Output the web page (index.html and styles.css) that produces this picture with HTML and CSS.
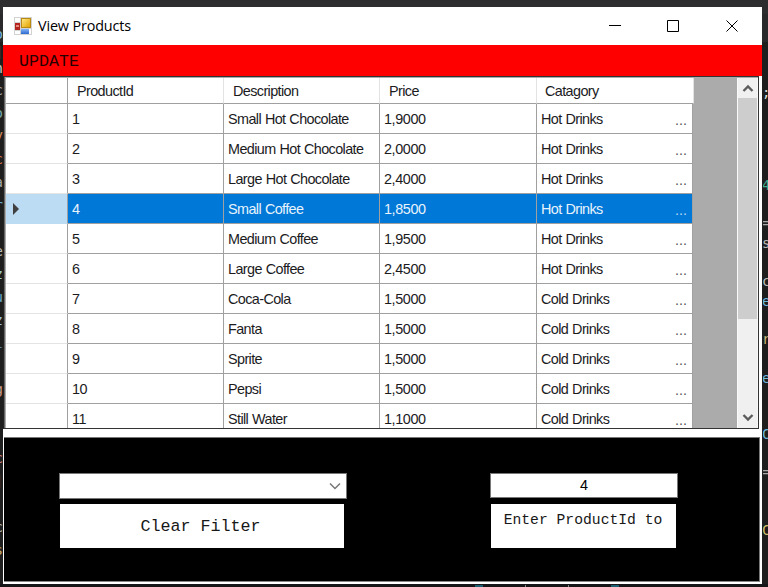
FILE: index.html
```html
<!DOCTYPE html>
<html lang="en">
<head>
<meta charset="utf-8">
<title>View Products</title>
<link rel="stylesheet" href="styles.css">
</head>
<body>
<div class="desktop">
  <div class="editor-left" id="left"></div>
  <div class="editor-right" id="right"></div>
  <div class="editor-bottom"><i></i><i></i><i></i><i></i></div>
  <main class="window">
    <header class="titlebar">
      <svg class="app-icon" width="18" height="18" viewBox="0 0 18 18">
        <defs>
          <linearGradient id="y" x1="0" y1="0" x2="1" y2="1"><stop offset="0" stop-color="#ffe680"/><stop offset="1" stop-color="#e2a300"/></linearGradient>
          <linearGradient id="b" x1="0" y1="0" x2="0" y2="1"><stop offset="0" stop-color="#85b4f5"/><stop offset="1" stop-color="#2d6bd0"/></linearGradient>
        </defs>
        <path fill="#d2d2d2" d="M0 0h18v18H0z"/>
        <path fill="#fff" d="M1 1h5v4H1zM1 14h5v3H1zM15 12h2v5h-2z"/>
        <path fill="#b32520" d="M1 6h5v7H1z"/><path fill="#e58a7c" d="M2 8h3v2H2z"/>
        <path fill="#b98a13" d="M7 1h10v10H7z"/><path fill="url(#y)" d="M8 2h8v8H8z"/>
        <path fill="url(#b)" d="M7 12h8v5H7z"/>
      </svg>
      <h1>View Products</h1>
      <div class="controls">
        <svg width="59" height="38"><path d="M24 18.500h12"/></svg>
        <svg width="58" height="38"><path d="M23.500 13.500h11v11h-11z"/></svg>
        <svg width="60" height="38"><path d="M24.500 13.500l11 11m0-11l-11 11"/></svg>
      </div>
    </header>
    <div class="menu"><span>UPDATE</span></div>
    <section class="gridview">
      <div class="rows" id="rows">
        <div class="row head"><b></b><span>ProductId</span><span>Description</span><span>Price</span><span>Catagory</span></div>
      </div>
      <div class="empty"></div>
      <div class="scroll">
        <svg width="20" height="20"><path d="M5.500 13l4.500-4.500 4.500 4.500"/></svg>
        <div class="thumb"></div>
        <svg width="20" height="20"><path d="M5.500 8l4.500 4.500L14.500 8"/></svg>
      </div>
    </section>
    <section class="panel">
      <div class="group filter">
        <div class="combo"><svg width="12" height="8"><path d="M1 1.500l5 5 5-5"/></svg></div>
        <div class="button">Clear Filter</div>
      </div>
      <div class="group product">
        <div class="input">4</div>
        <div class="button top">Enter ProductId to</div>
      </div>
    </section>
  </main>
</div>
<script src="app.js"></script>
</body>
</html>
```
FILE: styles.css
```css
* { box-sizing: border-box; }
body { margin: 0; overflow: hidden; }
.desktop { position: relative; width: 768px; height: 587px; background: #1e1e1e; overflow: hidden; padding: 7px 6px 3px 3px; }
.desktop::before { content: ""; position: absolute; left: 0; top: 0; width: 768px; height: 42px; background: linear-gradient(#2d2d30 0 14px, #29292b 14px 42px); }
.editor-left, .editor-right { position: absolute; top: 0; height: 587px; overflow: hidden; font: 14px "DejaVu Sans Mono", monospace; line-height: 16px; }
.editor-left { left: 0; width: 3px; }
.editor-right { left: 763px; width: 5px; }
.editor-left i, .editor-right i { position: absolute; font-style: normal; }
.editor-left i { right: 0; }
.editor-right i { left: -1px; }
.editor-bottom { position: absolute; left: 0; top: 584px; width: 768px; height: 3px; background: #161618; display: flex; gap: 42px; padding-left: 475px; }
.editor-bottom i { width: 8px; height: 2px; margin-top: 1px; background: #1b5f72; }
.editor-bottom i:nth-child(2), .editor-bottom i:nth-child(3) { width: 1px; background: #888; }
.window { position: relative; width: 759px; height: 577px; background: #fff; display: flex; flex-direction: column; }
.titlebar { height: 38px; flex: none; display: flex; align-items: center; padding-left: 11px; background: #fff; }
h1 { margin: 0 0 0 6px; font: 14.4px/20px "Open Sans", sans-serif; letter-spacing: -.15px; color: #000; white-space: nowrap; }
.controls { margin-left: auto; display: flex; }
.controls svg { fill: none; stroke: #000; }
.menu { height: 31px; flex: none; background: #f00; padding-left: 16px; font: 16.7px/33px "Liberation Mono", monospace; color: #260000; }
.gridview { height: 353px; flex: none; display: flex; border: solid #333; border-width: 1px 1px 1px 0; border-left: 1px solid #222; margin-right: 3px; padding-top: 1px; background: #ababab; overflow: hidden; box-shadow: inset 1px 0 #666; }
.rows { width: 689px; margin-left: 1px; border-left: 1px solid #ababab; background: #ababab; flex: none; }
.row { display: grid; grid-template-columns: 62px 156px 156px 157px 156px; height: 30px; width: 687px; font: 14.4px/30px "Liberation Sans", sans-serif; letter-spacing: -.6px; word-spacing: .5px; color: #1b1b1e; }
.row > * { background: #fff; border-right: 1px solid #a0a0a0; border-bottom: 1px solid #a0a0a0; padding-left: 4px; white-space: nowrap; overflow: hidden; font-weight: normal; }
.row > b { border-bottom-color: #e4e4e4; padding: 8px 0 0 6px; line-height: 0; }
.row:not(.head) span:nth-child(2), .row:not(.head) span:nth-child(4) { letter-spacing: -.4px; }
.row span:last-child { display: flex; justify-content: space-between; padding-right: 5px; }
.row em { font-style: normal; color: #555; letter-spacing: 0; padding-top: 1px; }
.head { height: 26px; line-height: 27px; width: 688px; grid-template-columns: 62px 156px 156px 157px 157px; }
.head > * { border-right-color: #e3e3e3; }
.head span { padding-left: 9px; }
.head span:last-child { padding-left: 8px; }
.head > b { border-right-color: #a0a0a0; border-bottom-color: #a0a0a0; }
.selected > span { background: #0078d7; color: #e8f3fc; }
.selected > b { background: #bcdcf4; border-bottom-color: #bcdcf4; }
.selected em { color: #b8d8f3; }
.empty { flex: 1; background: #ababab; }
.scroll { width: 21px; flex: none; background: #f0f0f0; border-left: 1px solid #fafafa; border-right: 1px solid #f7f7f7; display: flex; flex-direction: column; }
.scroll svg { fill: none; stroke: #5c5c5c; stroke-width: 2.4; flex: none; }
.thumb { height: 221px; width: 19px; background: #cdcdcd; }
.scroll svg:last-child { margin-top: auto; margin-bottom: 1px; }
.panel { height: 145px; flex: none; margin: 8px 2px 0 1px; background: #000; border-top: 1px solid #777; border-bottom: 1px solid #888; border-right: 1px solid #777; display: flex; padding: 35px 0 0 55px; }
.filter { width: 288px; }
.product { width: 188px; margin-left: 143px; }
.combo, .input { background: #fff; border: 1px solid #777; height: 26px; }
.combo { display: flex; justify-content: flex-end; align-items: center; padding-right: 5px; height: 26px; }
.combo svg { fill: none; stroke: #777; stroke-width: 1.5; }
.input { height: 25px; text-align: center; font: 14.4px/23px "Liberation Sans", sans-serif; }
.button { height: 44px; width: 284px; margin: 5px 0 0 1px; background: #fff; font: 16.7px/45px "Liberation Mono", monospace; color: #181818; text-align: center; white-space: nowrap; padding-right: 3px; }
.button.top { width: 185px; margin-top: 6px; line-height: 32px; font-size: 14.7px; padding-right: 1px; }
```
FILE: app.js
```js
const products = [
  ["Small Hot Chocolate", "1,9000", "Hot Drinks"],
  ["Medium Hot Chocolate", "2,0000", "Hot Drinks"],
  ["Large Hot Chocolate", "2,4000", "Hot Drinks"],
  ["Small Coffee", "1,8500", "Hot Drinks"],
  ["Medium Coffee", "1,9500", "Hot Drinks"],
  ["Large Coffee", "2,4500", "Hot Drinks"],
  ["Coca-Cola", "1,5000", "Cold Drinks"],
  ["Fanta", "1,5000", "Cold Drinks"],
  ["Sprite", "1,5000", "Cold Drinks"],
  ["Pepsi", "1,5000", "Cold Drinks"],
  ["Still Water", "1,1000", "Cold Drinks"]
];
const arrow = '<svg width="9" height="14"><path d="M1 1l6 6-6 6z" fill="#404040"/></svg>';
document.getElementById("rows").insertAdjacentHTML("beforeend", products.map(([name, price, category], i) =>
  `<div class="row${i === 3 ? " selected" : ""}"><b>${i === 3 ? arrow : ""}</b><span>${i + 1}</span><span>${name}</span><span>${price}</span><span>${category}<em>...</em></span></div>`
).join(""));

// Visible edges of the code editor behind the window: [top, character, colour]
const left = [[26, "o", "#79b8dd"], [44, "]", "#ccc"], [60, "n", "#ccc"], [82, "c", "#aaa"], [105, "o", "#7aa"], [127, "y", "#d88a55"], [151, "c", "#d8774a"], [174, "a", "#aaa"], [197, "r", "#6aa7cf"], [243, "e", "#bbb"], [266, "z", "#9cc"], [289, "u", "#6aa7cf"], [312, "z", "#9bd"], [335, "l", "#58a"], [381, "g", "#c98"], [450, "c", "#c88"], [473, "]", "#8ac"], [519, "c", "#bbb"], [542, "s", "#ccb070"]];
const right = [[84, ";", "#ddd"], [177, "4", "#3fae92"], [215, "=", "#aaa"], [235, "s", "#bbb"], [273, "c", "#bbb"], [293, "e", "#6fb9de"], [331, "r", "#c9b878"], [370, "e", "#6fb9de"], [426, "C", "#6fb9de"], [464, "=", "#aaa"], [522, "C", "#d0bf6d"]];
const draw = (id, list) => document.getElementById(id).innerHTML =
  list.map(([y, c, color]) => `<i style="top:${y}px;color:${color}">${c}</i>`).join("");
draw("left", left);
draw("right", right);
```
